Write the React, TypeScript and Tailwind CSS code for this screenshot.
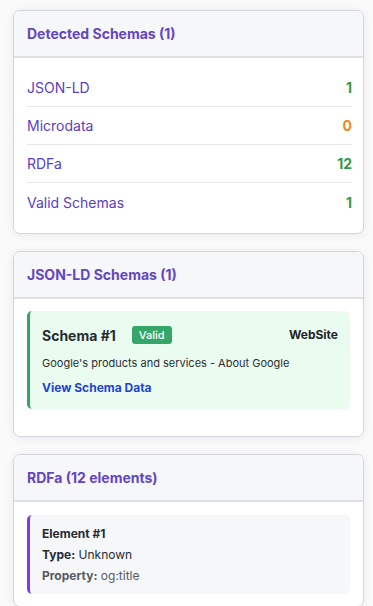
import React from "react";

const font = { fontFamily: "Inter, 'Noto Sans', sans-serif" };

function Card({ title, children, bodyClass }: { title: string; children: React.ReactNode; bodyClass: string }) {
  return (
    <div className="ml-[13px] w-[351px] rounded-[7px] border border-[#d3d6df] bg-white shadow-[0_1px_10px_rgba(0,0,0,0.07)] overflow-hidden">
      <div className="h-[47px] flex items-center px-[13px] bg-[#f6f7f9] border-b-2 border-[#dfe1e7]">
        <h2 className="text-[14px] font-bold text-[#6446bf]">{title}</h2>
      </div>
      <div className={bodyClass}>{children}</div>
    </div>
  );
}

const rows = [
  { label: "JSON-LD", value: "1", color: "text-[#2f9a46]" },
  { label: "Microdata", value: "0", color: "text-[#ee8a14]" },
  { label: "RDFa", value: "12", color: "text-[#2f9a46]" },
  { label: "Valid Schemas", value: "1", color: "text-[#2f9a46]" },
];

export default function App() {
  return (
    <div className="min-h-[606px] bg-[#fafafa] pt-[10px] flex flex-col gap-[17px]" style={font}>
      <Card title="Detected Schemas (1)" bodyClass="pl-[13px] pr-[11px] pt-[11px] pb-[12px]">
        {rows.map((r, i) => (
          <div
            key={r.label}
            className={`h-[38px] flex items-center justify-between ${i < rows.length - 1 ? "border-b border-[#e6e7eb]" : ""}`}
          >
            <span className="text-[14px] text-[#5b40c0]">{r.label}</span>
            <span className={`text-[14px] font-bold ${r.color}`}>{r.value}</span>
          </div>
        ))}
      </Card>

      <Card title="JSON-LD Schemas (1)" bodyClass="px-[13px] pt-[12px] pb-[27px]">
        <div className="rounded-[5px] border-l-[3px] border-[#34a466] bg-[#eafcef] pl-[12px] pr-[12px] pt-[12px] pb-[12px]">
          <div className="flex items-center justify-between h-[24px]">
            <div className="flex items-center gap-[16px]">
              <span className="text-[14px] font-bold text-[#262a33]">Schema #1</span>
              <span className="rounded-[3px] bg-[#35a66a] px-[7px] h-[18px] flex items-center text-[11px] text-white font-medium">Valid</span>
            </div>
            <span className="text-[12px] font-bold text-[#1f2329]">WebSite</span>
          </div>
          <p className="mt-[8px] text-[11px] text-[#2c2f36] leading-[16px]">Google's products and services - About Google</p>
          <a className="block mt-[8px] text-[12px] font-bold text-[#1f44d2] leading-[18px]">View Schema Data</a>
        </div>
      </Card>

      <Card title="RDFa (12 elements)" bodyClass="px-[13px] pt-[13px] pb-[12px]">
        <div className="rounded-[5px] border-l-[3px] border-[#7c3aed] bg-[#f6f7f9] pl-[12px] pr-[12px] pt-[11px] pb-[10px] flex flex-col gap-[5px]">
          <span className="text-[12px] font-bold text-[#262a33] leading-[16px]">Element #1</span>
          <span className="text-[12px] text-[#262a33] leading-[16px]"><b>Type:</b> Unknown</span>
          <span className="text-[12px] text-[#555a63] leading-[16px]"><b>Property:</b> og:title</span>
        </div>
      </Card>
    </div>
  );
}
